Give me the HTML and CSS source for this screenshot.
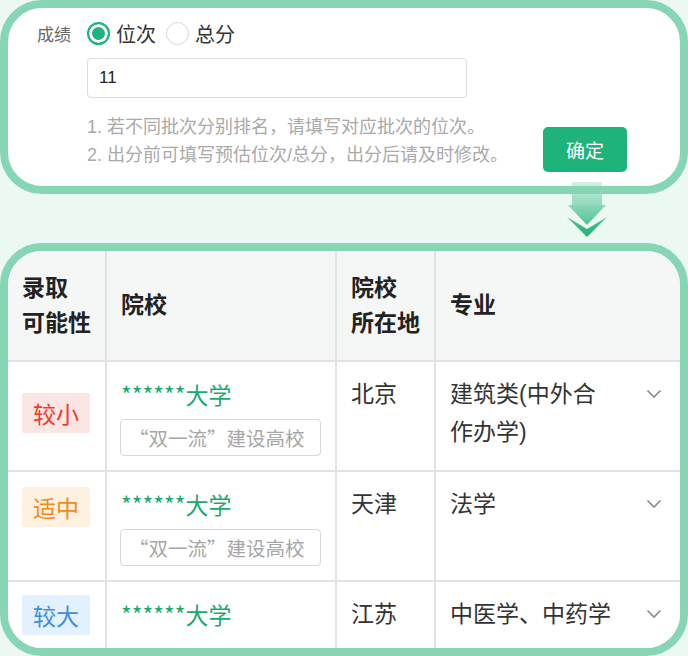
FILE: index.html
```html
<!DOCTYPE html>
<html lang="zh-CN">
<head>
<meta charset="utf-8">
<title>成绩</title>
<link rel="stylesheet" href="styles.css">
</head>
<body>
<div class="page">
  <section class="score-card">
    <div class="score-row">
      <span class="score-label">成绩</span>
      <span class="radio radio--on"></span><span class="radio-text">位次</span>
      <span class="radio"></span><span class="radio-text">总分</span>
    </div>
    <div class="score-input">11</div>
    <div class="score-foot">
      <div class="notes">
        <div>1. 若不同批次分别排名，请填写对应批次的位次。</div>
        <div>2. 出分前可填写预估位次/总分，出分后请及时修改。</div>
      </div>
      <button class="confirm">确定</button>
    </div>
  </section>

  <svg class="flow-arrow" width="40" height="56" viewBox="0 0 40 56">
    <defs>
      <linearGradient id="gStem" x1="0" y1="0" x2="0" y2="1">
        <stop offset="0" stop-color="#86d6b6" stop-opacity="0.35"/>
        <stop offset="1" stop-color="#86d6b6" stop-opacity="0.9"/>
      </linearGradient>
      <linearGradient id="gTri" x1="0" y1="0" x2="0" y2="1">
        <stop offset="0" stop-color="#8ad8b7"/>
        <stop offset="1" stop-color="#52c293"/>
      </linearGradient>
      <linearGradient id="gChev" x1="0" y1="0" x2="0" y2="1">
        <stop offset="0" stop-color="#4cc292"/>
        <stop offset="1" stop-color="#22b178"/>
      </linearGradient>
    </defs>
    <rect x="5" y="0" width="30" height="23" fill="url(#gStem)"/>
    <polygon points="1,23 39,23 20,43" fill="url(#gTri)"/>
    <polygon points="0,35 20,47 40,35 20,55" fill="url(#gChev)"/>
  </svg>

  <section class="result-card">
    <div class="grid">
      <div class="th">录取<br>可能性</div>
      <div class="th">院校</div>
      <div class="th">院校<br>所在地</div>
      <div class="th">专业</div>

      <div class="td"><span class="chance chance--low chance--first">较小</span></div>
      <div class="td"><div class="school">******大学</div><div class="badge">“双一流”建设高校</div></div>
      <div class="td">北京</div>
      <div class="td major"><span class="major-text">建筑类(中外合作办学)</span><svg class="chev" width="16" height="10" viewBox="0 0 16 10"><polyline points="1.5,1.5 8,8 14.5,1.5" fill="none" stroke="#8c8c8c" stroke-width="1.7"/></svg></div>

      <div class="td"><span class="chance chance--mid">适中</span></div>
      <div class="td"><div class="school">******大学</div><div class="badge">“双一流”建设高校</div></div>
      <div class="td">天津</div>
      <div class="td major"><span class="major-text">法学</span><svg class="chev" width="16" height="10" viewBox="0 0 16 10"><polyline points="1.5,1.5 8,8 14.5,1.5" fill="none" stroke="#8c8c8c" stroke-width="1.7"/></svg></div>

      <div class="td"><span class="chance chance--high">较大</span></div>
      <div class="td"><div class="school">******大学</div></div>
      <div class="td">江苏</div>
      <div class="td major"><span class="major-text">中医学、中药学</span><svg class="chev" width="16" height="10" viewBox="0 0 16 10"><polyline points="1.5,1.5 8,8 14.5,1.5" fill="none" stroke="#8c8c8c" stroke-width="1.7"/></svg></div>
    </div>
  </section>
</div>
</body>
</html>
```

FILE: styles.css
```css
html, body {
  margin: 0;
  padding: 0;
  background: #ecf8f2;
}
body {
  font-family: "Liberation Sans", "Noto Sans CJK SC", sans-serif;
  color: #333;
}
.page {
  position: relative;
  width: 688px;
  height: 656px;
  overflow: hidden;
}

/* top card */
.score-card {
  box-sizing: border-box;
  height: 194px;
  border: 8px solid #86d6b6;
  border-radius: 42px;
  background: #fff;
  padding-top: 10px;
}
.score-row {
  display: flex;
  align-items: center;
  height: 30px;
  padding-left: 29px;
}
.score-label {
  width: 50px;
  font-size: 17px;
  color: #666;
}
.radio {
  box-sizing: border-box;
  width: 23px;
  height: 23px;
  border-radius: 50%;
  border: 1px solid #d6d6d6;
  background: #fff;
  margin-right: 6px;
}
.radio--on {
  border: 2px solid #1db37a;
  background: #1db37a;
  box-shadow: inset 0 0 0 3px #fff;
}
.radio-text {
  font-size: 20px;
  color: #333;
  margin-right: 10px;
}
.score-input {
  box-sizing: border-box;
  margin: 10px 0 0 79px;
  width: 380px;
  height: 40px;
  border: 1px solid #dcdcdc;
  border-radius: 4px;
  padding-left: 11px;
  font-size: 17px;
  line-height: 38px;
  color: #222;
}
.score-foot {
  display: flex;
  align-items: flex-start;
  margin-top: 15px;
}
.notes {
  margin-left: 79px;
  font-size: 18px;
  line-height: 28px;
  color: #a9a9a9;
}
.confirm {
  margin: 14px 53px 0 auto;
  width: 84px;
  height: 45px;
  border: none;
  border-radius: 5px;
  background: #1db37a;
  color: #fff;
  font-family: "Noto Sans CJK SC", sans-serif;
  font-size: 19px;
  padding: 0;
}

/* arrow overlay */
.flow-arrow {
  position: absolute;
  left: 567px;
  top: 182px;
}

/* result card */
.result-card {
  box-sizing: border-box;
  margin-top: 49px;
  height: 413px;
  border: 8px solid #86d6b6;
  border-radius: 42px;
  background: #fff;
  overflow: hidden;
}
.grid {
  display: grid;
  grid-template-columns: 97px 228px 97px 1fr;
  grid-template-rows: 109px 108px 108px 1fr;
  gap: 2px;
  background: #e2e2e2;
  height: 100%;
}
.th {
  background: #f4f7f6;
  display: flex;
  align-items: center;
  padding: 0 14px;
  font-size: 23px;
  font-weight: bold;
  line-height: 35px;
  color: #222;
}
.td {
  background: #fff;
  padding: 13px 14px 0;
  font-size: 23px;
  line-height: 38px;
  color: #333;
  min-width: 0;
}
.chance {
  display: block;
  width: 68px;
  height: 40px;
  line-height: 40px;
  text-align: center;
  font-family: "Noto Sans CJK SC", sans-serif;
  font-size: 23px;
  border-radius: 2px;
}
.chance--first { margin-top: 18px; }
.chance--low { background: #fde5e3; color: #f0382b; }
.chance--mid { background: #fff1e0; color: #f5881d; margin-top: 2px; }
.chance--high { background: #e3f0fd; color: #3b8ee0; }
.school {
  font-family: "Noto Sans CJK SC", sans-serif;
  color: #1aaa6d;
}
.badge {
  box-sizing: border-box;
  margin: 6px 0 0 -1px;
  width: 201px;
  height: 37px;
  border: 1px solid #d8d8d8;
  border-radius: 4px;
  padding-left: 8px;
  font-family: "Noto Sans CJK SC", sans-serif;
  font-size: 19.5px;
  line-height: 35px;
  color: #a6a6a6;
  white-space: nowrap;
  overflow: hidden;
}
.major {
  display: flex;
  align-items: flex-start;
  padding-right: 18px;
}
.major-text {
  width: 165px;
}
.chev {
  margin-left: auto;
  margin-top: 14px;
}
```
